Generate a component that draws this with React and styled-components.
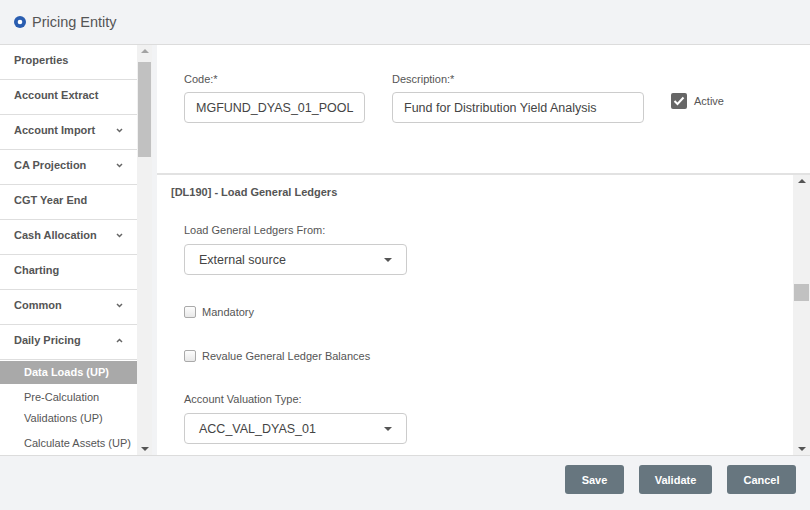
import styled, { createGlobalStyle } from 'styled-components'

const Global = createGlobalStyle`
  html, body { margin: 0; padding: 0; }
  body {
    font-family: "Liberation Sans", Arial, sans-serif;
    background: #f2f3f5;
  }
`

const Page = styled.div`
  width: 810px;
  height: 510px;
  display: flex;
  flex-direction: column;
  background: #f2f3f5;
  overflow: hidden;
`

const Header = styled.div`
  height: 44px;
  display: flex;
  align-items: center;
  gap: 6px;
  padding-left: 14px;
  border-bottom: 1px solid #dcdcdc;
  font-size: 14.5px;
  color: #555;
  flex-shrink: 0;
`

const Body = styled.div`
  height: 410px;
  display: flex;
  flex-shrink: 0;
`

const Sidebar = styled.div`
  width: 152px;
  display: flex;
  background: #fff;
`

const Menu = styled.div`
  flex: 1;
  display: flex;
  flex-direction: column;
  overflow: hidden;
`

const MenuItem = styled.div`
  height: 35px;
  display: flex;
  align-items: center;
  justify-content: space-between;
  padding: 0 14px 4px 14px;
  box-sizing: border-box;
  border-bottom: 1px solid #dedede;
  font-size: 11px;
  font-weight: bold;
  color: #555;
  flex-shrink: 0;
`

const SubItem = styled.div`
  padding-left: 24px;
  font-size: 11px;
  flex-shrink: 0;
  background: ${p => (p.$active ? '#a9a9a9' : 'transparent')};
  color: ${p => (p.$active ? '#fff' : '#555')};
  font-weight: ${p => (p.$active ? 'bold' : 'normal')};
  height: ${p => (p.$active ? '23px' : '21px')};
  line-height: ${p => (p.$active ? '23px' : '21px')};
  margin-top: ${p => p.$mt || 0}px;
  margin-bottom: ${p => p.$mb || 0}px;
`

const Track = styled.div`
  width: ${p => p.$w || 16}px;
  background: #f1f1f1;
  display: flex;
  flex-direction: column;
  align-items: center;
  justify-content: space-between;
  padding: 4px 0;
  box-sizing: border-box;
  position: relative;
  flex-shrink: 0;
`

const Thumb = styled.div`
  position: absolute;
  left: 1px;
  right: 1px;
  top: ${p => p.$top}px;
  height: ${p => p.$h}px;
  background: #c1c1c1;
`

const Arrow = styled.div`
  width: 0;
  height: 0;
  border-left: 4px solid transparent;
  border-right: 4px solid transparent;
  border-${p => (p.$up ? 'bottom' : 'top')}: 4px solid ${p => p.$c || '#a3a3a3'};
`

const Gutter = styled.div`
  width: 5px;
  background: #f2f3f5;
  flex-shrink: 0;
`

const Main = styled.div`
  flex: 1;
  display: flex;
  flex-direction: column;
  min-width: 0;
`

const TopPanel = styled.div`
  height: 130px;
  background: #fff;
  border-bottom: 2px solid #e2e2e2;
  display: flex;
  gap: 27px;
  padding: 28px 0 0 27px;
  box-sizing: border-box;
  flex-shrink: 0;
`

const Field = styled.div`
  display: flex;
  flex-direction: column;
  gap: 7px;
`

const Label = styled.div`
  font-size: 11px;
  color: #555;
  margin-top: ${p => p.$mt || 0}px;
`

const Input = styled.div`
  width: ${p => p.$w}px;
  height: 31px;
  box-sizing: border-box;
  border: 1px solid #ccc;
  border-radius: 4px;
  display: flex;
  align-items: center;
  padding-left: 11px;
  font-size: 12.5px;
  color: #444;
  white-space: nowrap;
  overflow: hidden;
`

const ActiveBox = styled.label`
  display: flex;
  align-items: flex-start;
  gap: 7px;
  margin-top: 20px;
  font-size: 11px;
  color: #555;
`

const ActiveText = styled.span`
  margin-top: 2px;
`

const CheckFilled = styled.div`
  width: 16px;
  height: 16px;
  background: #666;
  border-radius: 2px;
  display: flex;
  align-items: center;
  justify-content: center;
`

const LowerPanel = styled.div`
  flex: 1;
  background: #fff;
  display: flex;
  min-height: 0;
`

const Content = styled.div`
  flex: 1;
  padding: 11px 0 0 14px;
  display: flex;
  flex-direction: column;
`

const SectionTitle = styled.div`
  font-size: 11px;
  font-weight: bold;
  color: #555;
  height: 12px;
  line-height: 12px;
`

const Group = styled.div`
  padding-left: 13px;
  display: flex;
  flex-direction: column;
`

const Select = styled(Input)`
  justify-content: space-between;
  padding: 0 14px;
  margin-top: 8px;
`

const Caret = styled.div`
  width: 0;
  height: 0;
  border-left: 4px solid transparent;
  border-right: 4px solid transparent;
  border-top: 4px solid #555;
`

const CheckRow = styled.label`
  display: flex;
  align-items: center;
  gap: 6px;
  font-size: 11px;
  color: #555;
  margin-top: ${p => p.$mt}px;
`

const SmallBox = styled.span`
  width: 10px;
  height: 10px;
  border: 1px solid #aaa;
  border-radius: 2px;
  background: linear-gradient(#fdfdfd, #e8e8e8);
`

const Footer = styled.div`
  height: 55px;
  border-top: 1px solid #dcdcdc;
  display: flex;
  justify-content: flex-end;
  align-items: flex-start;
  gap: 15px;
  padding: 9px 14px 0 0;
  box-sizing: border-box;
  flex-shrink: 0;
`

const Button = styled.button`
  width: ${p => p.$w}px;
  height: 29px;
  border: none;
  border-radius: 3px;
  background: #67767f;
  color: #fff;
  font-family: "Liberation Sans", Arial, sans-serif;
  font-size: 11px;
  font-weight: bold;
`

const Chevron = ({ up }) => (
  <svg width="7" height="5" viewBox="0 0 7 5">
    <path d={up ? 'M1 4 L3.5 1.5 L6 4' : 'M1 1 L3.5 3.5 L6 1'} fill="none" stroke="#666" strokeWidth="1.5" />
  </svg>
)

const menu = [
  ['Properties'],
  ['Account Extract'],
  ['Account Import', 'down'],
  ['CA Projection', 'down'],
  ['CGT Year End'],
  ['Cash Allocation', 'down'],
  ['Charting'],
  ['Common', 'down'],
  ['Daily Pricing', 'up'],
]

export default function App() {
  return (
    <Page>
      <Global />
      <Header>
        <svg width="12" height="12" viewBox="0 0 12 12">
          <circle cx="6" cy="6" r="6" fill="#2a5db0" />
          <circle cx="6" cy="6" r="2.3" fill="#fff" />
        </svg>
        Pricing Entity
      </Header>
      <Body>
        <Sidebar>
          <Menu>
            {menu.map(([t, c]) => (
              <MenuItem key={t}>
                {t}
                {c && <Chevron up={c === 'up'} />}
              </MenuItem>
            ))}
            <SubItem $active $mt={1} $mb={3}>Data Loads (UP)</SubItem>
            <SubItem>Pre-Calculation</SubItem>
            <SubItem>Validations (UP)</SubItem>
            <SubItem $mt={4}>Calculate Assets (UP)</SubItem>
          </Menu>
          <Track $w={15}>
            <Thumb $top={17} $h={95} />
            <Arrow $up />
            <Arrow $c="#555" />
          </Track>
        </Sidebar>
        <Gutter />
        <Main>
          <TopPanel>
            <Field>
              <Label>Code:*</Label>
              <Input $w={181}>MGFUND_DYAS_01_POOL</Input>
            </Field>
            <Field>
              <Label>Description:*</Label>
              <Input $w={252}>Fund for Distribution Yield Analysis</Input>
            </Field>
            <ActiveBox>
              <CheckFilled>
                <svg width="12" height="10" viewBox="0 0 12 10">
                  <path d="M1.5 5 L4.5 8 L10.5 1.5" fill="none" stroke="#fff" strokeWidth="2" />
                </svg>
              </CheckFilled>
              <ActiveText>Active</ActiveText>
            </ActiveBox>
          </TopPanel>
          <LowerPanel>
            <Content>
              <SectionTitle>[DL190] - Load General Ledgers</SectionTitle>
              <Group>
                <Label $mt={26}>Load General Ledgers From:</Label>
                <Select $w={223}>
                  External source
                  <Caret />
                </Select>
                <CheckRow $mt={31}>
                  <SmallBox />
                  Mandatory
                </CheckRow>
                <CheckRow $mt={32}>
                  <SmallBox />
                  Revalue General Ledger Balances
                </CheckRow>
                <Label $mt={31}>Account Valuation Type:</Label>
                <Select $w={223}>
                  ACC_VAL_DYAS_01
                  <Caret />
                </Select>
              </Group>
            </Content>
            <Track $w={17}>
              <Thumb $top={109} $h={17} />
              <Arrow $up $c="#555" />
              <Arrow $c="#555" />
            </Track>
          </LowerPanel>
        </Main>
      </Body>
      <Footer>
        <Button $w={59}>Save</Button>
        <Button $w={73}>Validate</Button>
        <Button $w={69}>Cancel</Button>
      </Footer>
    </Page>
  )
}
